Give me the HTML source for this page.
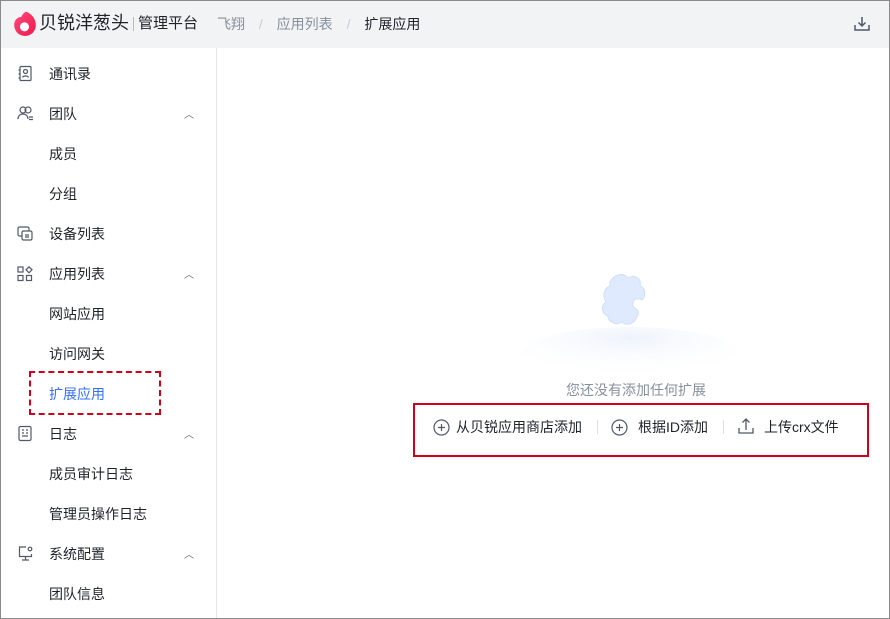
<!DOCTYPE html>
<html><head><meta charset="utf-8"><style>
*{margin:0;padding:0;box-sizing:border-box}
body{width:890px;height:619px;overflow:hidden;background:#fff;font-family:"Liberation Sans","Noto Sans CJK SC",sans-serif;color:#1f2329;position:relative}
.frame{position:absolute;left:0;top:0;width:890px;height:619px;border:1px solid #8a8a8a;pointer-events:none;z-index:10}
.hdr{position:absolute;left:0;top:0;width:890px;height:48px;background:#f2f3f5}
.side{position:absolute;left:0;top:48px;width:217px;height:571px;border-right:1px solid #e3e5e8}
.it{position:absolute;left:49px;font-size:14px;color:#1f2329;line-height:20px}
.ic{position:absolute;left:17px}
.car{position:absolute;left:184px;font-size:10px;color:#666}
.t{position:absolute;font-size:14px;line-height:20px;white-space:nowrap}
</style></head><body>
<div class="hdr">
 <svg style="position:absolute;left:12px;top:10px" width="26" height="26" viewBox="0 0 24 24"><defs><linearGradient id="g" x1="0" y1="0" x2="1" y2="1"><stop offset="0" stop-color="#ff4a7a"/><stop offset="1" stop-color="#f01850"/></linearGradient></defs><path d="M13 1.5c5 2 9 6.5 9 12.5a10 10 0 0 1-20 0c0-4.5 3-7.5 6.5-7.5 1-2.500 2.500-4 4.500-5z" fill="url(#g)"/><circle cx="11.5" cy="15.5" r="4.2" fill="#fff"/></svg>
 <div class="t" style="left:39px;top:11px;font-size:18px;line-height:24px;color:#1f2329">贝锐洋葱头</div>
 <div style="position:absolute;left:133px;top:17px;width:1px;height:14px;background:#bbb"></div>
 <div class="t" style="left:138px;top:13px;font-size:15px;line-height:22px;color:#1f2329">管理平台</div>
 <div class="t" style="left:217px;top:14px;color:#86909c">飞翔 <span style="margin:0 10px;color:#c9cdd4">/</span> 应用列表 <span style="margin:0 10px;color:#c9cdd4">/</span> <span style="color:#1f2329">扩展应用</span></div>
 <svg style="position:absolute;left:852px;top:14px" width="20" height="20" viewBox="0 0 20 20" fill="none" stroke="#4e5969" stroke-width="1.5"><path d="M10 3v9M6.5 8.5 10 12l3.5-3.5M3 11v5h14v-5"/></svg>
</div>
<div class="side">
 <svg class="ic" style="top:17px" width="16" height="18" viewBox="0 0 16 18" fill="none" stroke="#4e5969" stroke-width="1.2"><rect x="3" y="1.5" width="11" height="14" rx="1"/><circle cx="8.5" cy="6.5" r="2"/><path d="M5.5 12.5c.5-2 5.5-2 6 0M1.5 5h2M1.5 9h2M1.5 13h2"/></svg>
 <div class="it" style="top:16px">通讯录</div>
 <svg class="ic" style="top:57px" width="18" height="16" viewBox="0 0 18 16" fill="none" stroke="#4e5969" stroke-width="1.2"><circle cx="6" cy="5" r="3"/><circle cx="11" cy="5" r="3"/><path d="M1 14c0-3 2-5 5-5s5 2 5 5M12 12h4M12 14.5h4"/></svg>
 <div class="it" style="top:56px">团队</div><div class="car" style="top:58px">︿</div>
 <div class="it" style="top:96px">成员</div>
 <div class="it" style="top:136px">分组</div>
 <svg class="ic" style="top:178px" width="18" height="16" viewBox="0 0 18 16" fill="none" stroke="#4e5969" stroke-width="1.2"><rect x="1" y="1" width="11" height="9" rx="1.5"/><rect x="5" y="5" width="10" height="9" rx="1.5" fill="#fff"/><path d="M8 9h4M8 11h4"/></svg>
 <div class="it" style="top:176px">设备列表</div>
 <svg class="ic" style="top:218px" width="16" height="16" viewBox="0 0 16 16" fill="none" stroke="#4e5969" stroke-width="1.2"><rect x="1" y="1" width="5" height="5"/><rect x="1" y="9.5" width="5" height="5"/><rect x="9.5" y="9.5" width="5" height="5"/><path d="M12 .8 15 3.8 12 6.8 9 3.8z"/></svg>
 <div class="it" style="top:216px">应用列表</div><div class="car" style="top:218px">︿</div>
 <div class="it" style="top:256px">网站应用</div>
 <div class="it" style="top:296px">访问网关</div>
 <div class="it" style="top:336px;color:#3370ff">扩展应用</div>
 <div style="position:absolute;left:29px;top:323px;width:132px;height:44px;border:2px dashed #d0021b"></div>
 <svg class="ic" style="top:377px" width="16" height="18" viewBox="0 0 16 18" fill="none" stroke="#4e5969" stroke-width="1.2"><rect x="2" y="1.5" width="12" height="14" rx="1.5"/><path d="M5 5h2M9 5h2M5 8h2M9 8h2M5 11h6"/></svg>
 <div class="it" style="top:376px">日志</div><div class="car" style="top:378px">︿</div>
 <div class="it" style="top:416px">成员审计日志</div>
 <div class="it" style="top:456px">管理员操作日志</div>
 <svg class="ic" style="top:497px" width="18" height="18" viewBox="0 0 18 18" fill="none" stroke="#4e5969" stroke-width="1.2"><path d="M9 2H2.5v9.5h12V9"/><path d="M8.5 11.5v3M5 15h7"/><circle cx="13" cy="4" r="1.8"/></svg>
 <div class="it" style="top:496px">系统配置</div><div class="car" style="top:498px">︿</div>
 <div class="it" style="top:536px">团队信息</div>
</div>
<svg style="position:absolute;left:520px;top:260px" width="220" height="120" viewBox="0 0 220 120"><defs><radialGradient id="e" cx="0.5" cy="0.2" r="0.7"><stop offset="0" stop-color="#eef3fb"/><stop offset="1" stop-color="#fff" stop-opacity="0"/></radialGradient></defs><ellipse cx="110" cy="95" rx="110" ry="28" fill="url(#e)"/><path d="M90 22c4-8 14-10 18-4 6-4 14 0 12 8 6 2 6 10 2 14-6-4-12 2-8 8 4 0 6 6 2 10-2 6-10 8-14 4-6 4-14 0-14-6-6-2-8-10-2-14-4-6-2-14 4-16z" fill="#dfeaff" stroke="#d0dffa"/></svg>
<div class="t" style="left:566px;top:380px;color:#86909c">您还没有添加任何扩展</div>
<div style="position:absolute;left:413px;top:403px;width:456px;height:54px;border:2px solid #d0021b"></div>
<svg style="position:absolute;left:433px;top:419px" width="17" height="17" viewBox="0 0 17 17" fill="none" stroke="#4e5969" stroke-width="1.2"><circle cx="8.5" cy="8.5" r="7.5"/><path d="M8.5 5v7M5 8.5h7"/></svg>
<div class="t" style="left:456px;top:417px;color:#1f2329">从贝锐应用商店添加</div>
<div style="position:absolute;left:597px;top:420px;width:1px;height:14px;background:#dde0e4"></div>
<svg style="position:absolute;left:611px;top:419px" width="17" height="17" viewBox="0 0 17 17" fill="none" stroke="#4e5969" stroke-width="1.2"><circle cx="8.5" cy="8.5" r="7.5"/><path d="M8.5 5v7M5 8.5h7"/></svg>
<div class="t" style="left:638px;top:417px;color:#1f2329">根据ID添加</div>
<div style="position:absolute;left:723px;top:420px;width:1px;height:14px;background:#dde0e4"></div>
<svg style="position:absolute;left:737px;top:417px" width="18" height="18" viewBox="0 0 18 18" fill="none" stroke="#4e5969" stroke-width="1.3"><path d="M9 13V2M5.5 5.5 9 2l3.5 3.5M2 11v5h14v-5"/></svg>
<div class="t" style="left:764px;top:417px;color:#1f2329">上传crx文件</div>
<div class="frame"></div>
</body></html>
